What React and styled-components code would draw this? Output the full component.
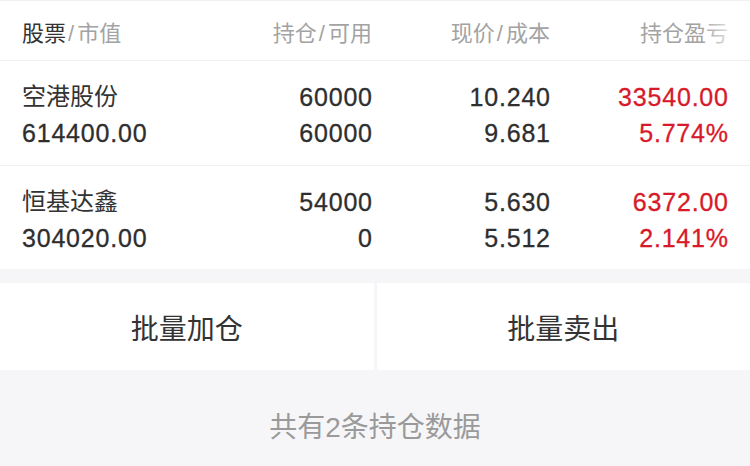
import styled, { createGlobalStyle } from "styled-components"

const GlobalStyle = createGlobalStyle`
	html, body {
		margin: 0;
		padding: 0;
		background: #f6f6f8;
	}
	body {
		font-family: "Liberation Sans", "Noto Sans CJK SC", sans-serif;
		color: #333;
	}
`

const positions = [
	{ name: "空港股份", value: "614400.00", hold: "60000", usable: "60000", price: "10.240", cost: "9.681", profit: "33540.00", rate: "5.774%" },
	{ name: "恒基达鑫", value: "304020.00", hold: "54000", usable: "0", price: "5.630", cost: "5.512", profit: "6372.00", rate: "2.141%" },
]

export default function App() {
	return (
		<Page>
			<GlobalStyle />
			<Table>
				<HeadRow>
					<HeadCell>
						<strong>股票</strong><Slash>/</Slash>市值
					</HeadCell>
					<HeadCell $right>持仓<Slash>/</Slash>可用</HeadCell>
					<HeadCell $right>现价<Slash>/</Slash>成本</HeadCell>
					<HeadCell $right>持仓盈亏</HeadCell>
					<Fade />
				</HeadRow>
				{positions.map((p) => (
					<Row key={p.name}>
						<Cell>
							<Name>{p.name}</Name>
							<Num>{p.value}</Num>
						</Cell>
						<Cell $right>
							<Num>{p.hold}</Num>
							<Num>{p.usable}</Num>
						</Cell>
						<Cell $right>
							<Num>{p.price}</Num>
							<Num>{p.cost}</Num>
						</Cell>
						<Cell $right>
							<Num $red>{p.profit}</Num>
							<Num $red>{p.rate}</Num>
						</Cell>
					</Row>
				))}
			</Table>
			<Actions>
				<ActionButton>批量加仓</ActionButton>
				<ActionButton>批量卖出</ActionButton>
			</Actions>
			<Footer>共有2条持仓数据</Footer>
		</Page>
	)
}

const Page = styled.div`
	width: 750px;
	height: 466px;
	overflow: hidden;
	background: #f6f6f8;
`

const Table = styled.div`
	background: #fff;
	border-top: 1px solid #f0f0f2;
`

const columns = `
	display: grid;
	grid-template-columns: 180px 170px 178px 178px;
	padding: 0 22px;
`

const HeadRow = styled.div`
	${columns}
	position: relative;
	height: 59px;
	align-items: center;
	border-bottom: 1px solid #efeff1;
`

const HeadCell = styled.div`
	font-size: 22px;
	color: #a3a3a3;
	text-align: ${(p) => (p.$right ? "right" : "left")};
	white-space: nowrap;

	strong {
		font-weight: normal;
		color: #333;
	}
`

const Slash = styled.span`
	display: inline-block;
	margin: 0 3px 0 2px;
`

const Fade = styled.div`
	position: absolute;
	top: 0;
	right: 0;
	width: 48px;
	height: 100%;
	background: linear-gradient(to right, rgba(255, 255, 255, 0), #fff 85%);
`

const Row = styled.div`
	${columns}
	padding-top: 18px;
	padding-bottom: 14px;
	border-bottom: 1px solid #f0f0f2;

	&:last-child {
		border-bottom: none;
		padding-bottom: 13px;
	}
`

const Cell = styled.div`
	display: flex;
	flex-direction: column;
	align-items: ${(p) => (p.$right ? "flex-end" : "flex-start")};
`

const Name = styled.div`
	font-size: 24px;
	line-height: 36px;
	color: #333;
`

const Num = styled.div`
	font-size: 25px;
	line-height: 36px;
	letter-spacing: 0.8px;
	margin-right: -0.8px;
	-webkit-text-stroke: 0.3px currentColor;
	color: ${(p) => (p.$red ? "#d71a2a" : "#2e2e2e")};
`

const Actions = styled.div`
	display: grid;
	grid-template-columns: 1fr 1fr;
	gap: 3px;
	margin-top: 14px;
`

const ActionButton = styled.div`
	height: 87px;
	background: #fff;
	display: flex;
	align-items: center;
	justify-content: center;
	font-size: 28px;
	color: #333;
`

const Footer = styled.div`
	height: 110px;
	display: flex;
	align-items: center;
	justify-content: center;
	font-size: 28px;
	color: #9a9a9a;
`
